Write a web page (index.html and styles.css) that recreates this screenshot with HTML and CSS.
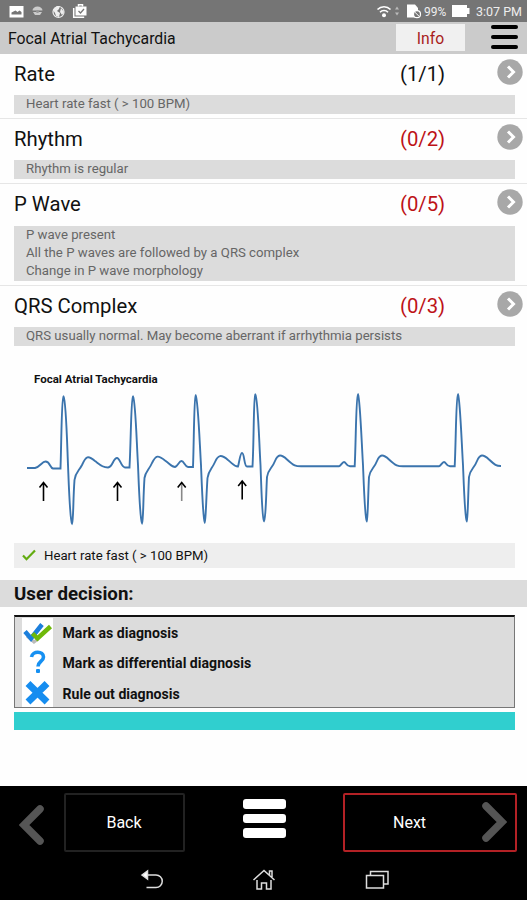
FILE: index.html
```html
<!DOCTYPE html>
<html lang="en">
<head>
    <meta charset="UTF-8">
    <meta name="viewport" content="width=device-width, initial-scale=1.0">
    <title>Focal Atrial Tachycardia</title>
    <link rel="stylesheet" href="styles.css">
</head>
<body>
    <div class="status-bar">
        <svg class="status-left" width="90" height="22" viewBox="0 0 90 22">
            <path fill="#fff" fill-rule="evenodd" d="M9.500 6h14v11.500h-14zM11.500 14.500h10v-2.500l-2-1.500-2 1.500-2-1.500-4 2z"/>
            <path fill="#ccc" d="M32.500 10.500a5 4 0 0 1 10 0zM33 12h9l-2 3h-5z"/>
            <circle cx="37.500" cy="11.500" r="1.500" fill="#999"/>
            <circle cx="58.500" cy="12" r="5.500" fill="none" stroke="#eee" stroke-width="1.200"/>
            <path fill="#eee" d="M53 10l4-4 3 0-1 3-2 2 3 2-1 4-3-1-1-3zM61 8l3 4-2 3-2-3z"/>
            <path fill="none" stroke="#fff" stroke-width="1.500" d="M73.700 8v9.300h10.500M78.500 6.500V4.800h4v1.700"/>
            <path fill="#fff" d="M75.500 6.500h11v9h-11z"/>
            <path fill="none" stroke="#777" stroke-width="1.300" d="M78.500 11l2 2 3.500-4"/>
        </svg>
        <div class="status-right">
            <svg width="48" height="22" viewBox="0 0 48 22">
                <path fill="none" stroke="#fff" stroke-width="1.600" d="M1.500 9.500a9 9 0 0 1 13 0M4 12.200a5.500 5.500 0 0 1 8 0"/>
                <circle cx="8" cy="15.200" r="2" fill="#fff"/>
                <path fill="#bbb" d="M19 9.500l2-3 2 3zM19 12.500l2 3 2-3z"/>
                <path fill="#fff" d="M31 4.500h8l3 3.500v9.500H31z"/>
                <circle cx="41" cy="14.200" r="3.500" fill="#757575" stroke="#fff" stroke-width="1.200"/>
                <path stroke="#fff" d="M38.700 12l4.600 4.500"/>
            </svg>
            <span class="percent">99%</span>
            <svg width="18" height="12" viewBox="0 0 18 12"><path fill="#fff" d="M0 0h15v3h2.500v6H15v3H0z"/></svg>
            <span class="clock">3:07 PM</span>
        </div>
    </div>

    <div class="title-bar">
        <h1>Focal Atrial Tachycardia</h1>
        <button class="info">Info</button>
        <div class="menu"><span></span><span></span><span></span></div>
    </div>

    <div class="section">
        <div class="row">
            <h2>Rate</h2>
            <span class="score">(1/1)</span>
            <svg class="go" viewBox="0 0 26 26"><circle cx="13" cy="13" r="12.700"/><path d="M11 7.500l5.500 5.500-5.500 5.500"/></svg>
        </div>
        <div class="note">Heart rate fast ( &gt; 100 BPM)</div>
    </div>
    <div class="section">
        <div class="row">
            <h2>Rhythm</h2>
            <span class="score wrong">(0/2)</span>
            <svg class="go" viewBox="0 0 26 26"><circle cx="13" cy="13" r="12.700"/><path d="M11 7.500l5.500 5.500-5.500 5.500"/></svg>
        </div>
        <div class="note">Rhythm is regular</div>
    </div>
    <div class="section">
        <div class="row">
            <h2>P Wave</h2>
            <span class="score wrong">(0/5)</span>
            <svg class="go" viewBox="0 0 26 26"><circle cx="13" cy="13" r="12.700"/><path d="M11 7.500l5.500 5.500-5.500 5.500"/></svg>
        </div>
        <div class="note">P wave present<br>All the P waves are followed by a QRS complex<br>Change in P wave morphology</div>
    </div>
    <div class="section last">
        <div class="row">
            <h2>QRS Complex</h2>
            <span class="score wrong">(0/3)</span>
            <svg class="go" viewBox="0 0 26 26"><circle cx="13" cy="13" r="12.700"/><path d="M11 7.500l5.500 5.500-5.500 5.500"/></svg>
        </div>
        <div class="note">QRS usually normal. May become aberrant if arrhythmia persists</div>
    </div>

    <div class="ecg">
        <p>Focal Atrial Tachycardia</p>
        <svg width="527" height="142" viewBox="0 388 527 142">
            <path class="trace" d="M27 468H35C40 467 42 461.500 45.500 461.500C50 461.500 50 468 53 468.500H60.500C61.500 440 61.500 398 63.500 396.500C66 400 67 440 68 465C69 490 70 521 72 523.500C73.500 521 73 500 74.500 480C75.500 472 79 471 82 465C86 456 88 455 95 461C101 465.500 103 467.500 108 467.500
                C113 467 113 458 117 458C120 458 121 467 125 467.500H129.500C131 440 131 398 133 396.500C135.500 400 136.500 440 138 465C139 490 140 520 142 523C143.500 520 143 500 144.500 478C145.500 471 149 470 152 463C156 455 158 455 165 460.500C171 465 172 467 175 467
                C178 466 179 461 181.500 461C184 461 185 467 188 467H193C194 440 194 397 195.700 395.500C198 399 199.500 440 201 465C202 490 203 519 204.700 522C206 519 206 500 207.500 478C208.500 470 212 469 215 462C218 455 221 454 228 460C233 464 234 466.500 238 466.500
                C239 464 240 453 242 453C244.500 453 244 466.500 247 466.500H252.500C254 440 253.500 396 255.300 394.500C258 398 259 440 260.500 465C261.500 490 262 519 264 521C266 518 266 495 267 477C268 469 272 469 275 461C278 454 281 454 287 459.500C294 466 296 466.300 301 466.300
                H339C341 466 342 462 344 462C346 462 346 466.300 350 466.300H354.700C356 440 356 396 358 394.500C360 398 361.500 440 363 465C364 490 365 519 366.700 521C368 518 368 495 369 477C370 469 374 469 377 461C380 454 383 454 389 459.500C396 466 398 466.300 403 466.300
                H439C441 466 442 462 444 462C446 462 446 466.300 450 466.300H454.700C456 440 456 396 458 394.500C460 398 461.500 440 463 465C464 490 465 519 466.700 521C468 518 468 495 469 477C470 469 474 469 477 461C480 454 483 454 489 459.500C495 465 496 466 501 466"/>
            <path class="arrow" d="M43.500 501V483M39.500 487.500l4-5 4 5M117.500 501V483M113.500 487.500l4-5 4 5M242.200 499.500V481.500M238.200 486l4-5 4 5"/>
            <path class="arrow faded" d="M181.700 501V483"/>
            <path class="arrow" d="M177.700 487.500l4-5 4 5"/>
        </svg>
    </div>

    <div class="answer">
        <svg width="14" height="12" viewBox="0 0 14 12"><path fill="none" stroke="#62ab10" stroke-width="2.200" d="M1 6.500l3.500 3.700L13 1.500"/></svg>
        <span>Heart rate fast ( &gt; 100 BPM)</span>
    </div>

    <h3 class="decision-title">User decision:</h3>

    <div class="decisions">
        <div class="icons">
            <svg width="31" height="30" viewBox="0 0 31 30">
                <path fill="none" stroke="#bbb" stroke-width="3" d="M5 18l7 6 4-3"/>
                <path fill="none" stroke="#1c7fdc" stroke-width="4.500" d="M3 13.500l6 7L20 6.500"/>
                <path fill="none" stroke="#6eb80a" stroke-width="4.500" d="M10.500 15.500l5 5L28.500 8.500"/>
            </svg>
            <svg width="31" height="29" viewBox="0 0 31 29">
                <path fill="none" stroke="#1690f2" stroke-width="3.600" d="M9.500 9C10.500 2.500 21.500 2.700 21.500 9C21.500 13.500 16 13.500 16 18.500"/>
                <rect x="14" y="21" width="4" height="4" rx="1" fill="#1690f2"/>
            </svg>
            <svg width="31" height="30" viewBox="0 0 31 30"><path fill="none" stroke="#168df0" stroke-width="7" stroke-linecap="square" d="M8.500 9l14 13.500M22.500 9l-14 13.500"/></svg>
        </div>
        <ul>
            <li>Mark as diagnosis</li>
            <li>Mark as differential diagnosis</li>
            <li>Rule out diagnosis</li>
        </ul>
    </div>
    <div class="teal-bar"></div>

    <div class="footer">
        <div class="nav">
            <svg class="arrow-left" width="26" height="42" viewBox="0 0 26 42"><path d="M21 5L5 21l16 16"/></svg>
            <button class="back">Back</button>
            <div class="menu white"><span></span><span></span><span></span></div>
            <button class="next">
                <span>Next</span>
                <svg width="26" height="42" viewBox="0 0 26 42"><path d="M5 4l16 16L5 36"/></svg>
            </button>
        </div>
        <div class="system">
            <svg width="24" height="22" viewBox="0 0 24 22"><path d="M5 6h11a6.200 6.200 0 0 1 0 12.500H6.500"/><path class="solid" d="M2 6l5.500-4v8z"/></svg>
            <svg width="24" height="22" viewBox="0 0 24 22"><path d="M1.500 11L12 1.500l10.500 9.500M17.500 6V2H20v6M5 11v9h4.500v-6h5v6H19v-9"/></svg>
            <svg width="24" height="22" viewBox="0 0 24 22"><path d="M1.500 6.500h17v12.500h-17zM5.500 6V2.500h17.500v12.500h-4"/></svg>
        </div>
    </div>
</body>
</html>
```

FILE: styles.css
```css
* {
    box-sizing: border-box;
}
body {
    margin: 0;
    height: 900px;
    display: flex;
    flex-direction: column;
    overflow: hidden;
    font-family: Roboto, Arial, sans-serif;
    background-color: #fefefe;
    color: #111;
}
h1, h2, h3, p, ul {
    margin: 0;
    padding: 0;
    font-weight: normal;
}
svg {
    display: block;
    flex: none;
}
.status-bar {
    height: 22px;
    flex: none;
    display: flex;
    justify-content: space-between;
    background-color: #757575;
    color: #eee;
    font-size: 12.5px;
}
.status-right {
    display: flex;
    align-items: center;
    padding-right: 5px;
}
.percent {
    width: 24px;
    margin: 1px 4px 0 0;
    font-size: 12px;
}
.clock {
    width: 46px;
    margin: 1px 0 0 6px;
    white-space: nowrap;
}
.title-bar {
    height: 32px;
    flex: none;
    display: flex;
    align-items: flex-start;
    padding-left: 8px;
    background-color: #cbcbcb;
}
.title-bar h1 {
    width: 388px;
    font-size: 15.8px;
    line-height: 34px;
    white-space: nowrap;
}
.info {
    width: 69px;
    height: 27px;
    margin-top: 2px;
    padding: 1px 0 0;
    border: none;
    background-color: #f0f0f0;
    color: #a81c20;
    font-family: inherit;
    font-size: 15.7px;
}
.menu {
    width: 27px;
    margin: 3px 0 0 26px;
    display: flex;
    flex-direction: column;
    gap: 6px;
}
.menu span {
    height: 4px;
    border-radius: 2px;
    background-color: #000;
}
.section {
    flex: none;
    padding-bottom: 4.6px;
    border-bottom: 1px solid #e6e6e6;
}
.section.last {
    border-bottom: none;
}
.row {
    height: 41.3px;
    display: flex;
    align-items: flex-start;
    padding: 4.5px 4px 0 14px;
}
.row h2 {
    width: 386px;
    font-size: 20.3px;
    line-height: 30px;
}
.score {
    width: 97px;
    font-size: 20.3px;
    line-height: 30px;
}
.wrong {
    color: #bd1217;
}
.go {
    width: 26px;
    height: 26px;
}
.go circle {
    fill: #a8a8a8;
}
.go path {
    fill: none;
    stroke: #fff;
    stroke-width: 3;
}
.note {
    margin: 0 12.5px 0 14px;
    padding-left: 12px;
    background-color: #dcdcdc;
    color: #666;
    font-size: 13.2px;
    line-height: 18.3px;
}
.ecg {
    height: 192.5px;
    flex: none;
}
.ecg p {
    height: 38px;
    padding: 22px 0 0 34px;
    font-size: 11.5px;
    line-height: 14px;
    font-weight: bold;
}
.trace {
    fill: none;
    stroke: #3b74ad;
    stroke-width: 1.9;
}
.arrow {
    fill: none;
    stroke: #000;
    stroke-width: 1.6;
}
.faded {
    stroke: #888;
}
.answer {
    height: 25px;
    flex: none;
    display: flex;
    align-items: center;
    gap: 8px;
    margin: 0 12.5px 0 14px;
    padding-left: 8px;
    background-color: #eee;
    font-size: 13.2px;
}
.decision-title {
    height: 27px;
    flex: none;
    margin-top: 12px;
    padding-left: 14px;
    background-color: #dcdcdc;
    font-size: 18.7px;
    font-weight: bold;
    line-height: 28px;
}
.decisions {
    height: 93px;
    flex: none;
    display: flex;
    margin: 8px 12.5px 0 14px;
    border: 1px solid #777;
    border-top: 2px solid #111;
    background-color: #dcdcdc;
}
.icons {
    width: 31px;
    margin: 1px 0 0 7px;
    background-color: #fff;
}
.decisions ul {
    padding: 1px 0 0 9.5px;
    list-style: none;
    font-size: 14.1px;
    font-weight: bold;
    line-height: 30.6px;
}
.teal-bar {
    height: 18px;
    flex: none;
    margin: 4px 12.5px 0 14px;
    background-color: #30cfcf;
}
.footer {
    height: 114px;
    flex: none;
    margin-top: auto;
    background-color: #000;
}
.nav {
    height: 80px;
    display: flex;
    align-items: flex-start;
    padding: 7px 0 0 19px;
}
.nav svg path {
    fill: none;
    stroke: #555;
    stroke-width: 7.5;
    stroke-linecap: round;
}
.arrow-left {
    margin-top: 11px;
}
.back, .next {
    height: 59px;
    background-color: #000;
    color: #fff;
    font-family: inherit;
    font-size: 16px;
    border-radius: 2px;
}
.back {
    width: 121px;
    margin-left: 18.5px;
    border: 2px solid #222;
}
.menu.white {
    width: 43px;
    margin: 6px 0 0 58px;
    gap: 5px;
}
.white span {
    height: 9.5px;
    border-radius: 3px;
    background-color: #fff;
}
.next {
    width: 174px;
    margin-left: 57.5px;
    display: flex;
    align-items: center;
    justify-content: space-between;
    padding: 0 8px 0 48px;
    border: 2.5px solid #b32125;
}
.system {
    display: flex;
    justify-content: center;
    gap: 88.5px;
    padding: 3px 0 0 1px;
}
.system path {
    fill: none;
    stroke: #ddd;
    stroke-width: 1.5;
}
.system .solid {
    fill: #fff;
}
```
